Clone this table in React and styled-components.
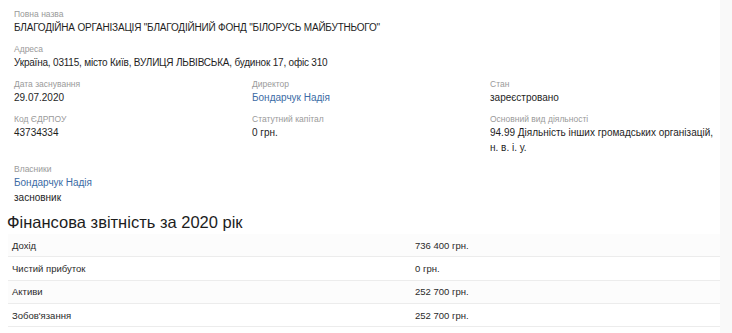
import React from 'react';
import styled, { createGlobalStyle } from 'styled-components';

const GlobalStyle = createGlobalStyle`
  html, body {
    margin: 0;
    padding: 0;
    background: #f9f9f9;
  }
  body {
    font-family: 'Liberation Sans', Arial, sans-serif;
    color: #222;
    -webkit-font-smoothing: antialiased;
  }
`;

const Page = styled.main`
  width: 720px;
  min-height: 333px;
  background: #fff;
  padding-top: 9px;
  box-sizing: border-box;
`;

const Info = styled.section`
  padding-left: 14px;
  display: grid;
  grid-template-columns: repeat(3, 238px);
  row-gap: 9px;
`;

const Field = styled.div`
  grid-column: ${p => (p.$wide ? '1 / -1' : 'auto')};
  padding-right: 6px;
`;

const Label = styled.div`
  font-size: 8.5px;
  line-height: 11px;
  color: #9a9a9a;
`;

const Value = styled.div`
  font-size: 10px;
  line-height: 15px;
  color: #1e1e1e;
  letter-spacing: ${p => (p.$caps ? '-0.2px' : '0')};
`;

const Link = styled.a`
  display: block;
  font-size: 10px;
  line-height: 15px;
  color: #3b6ba5;
  text-decoration: none;
`;

const Heading = styled.h2`
  margin: 6px 0 0 7px;
  font-size: 16.5px;
  line-height: 22px;
  font-weight: 400;
  color: #1d1d1d;
`;

const Table = styled.div`
  margin: 1px 0 0 8px;
  width: 712px;
`;

const Row = styled.div`
  display: grid;
  grid-template-columns: 403px 1fr;
  height: 22.3px;
  align-items: center;
  border-bottom: 1px solid #ececec;
  background: ${p => (p.$odd ? '#fcfcfc' : '#fff')};
`;

const Cell = styled.div`
  padding-left: 4px;
  font-size: 9.5px;
  color: #2a2a2a;
`;

const finance = [
  ['Дохід', '736 400 грн.'],
  ['Чистий прибуток', '0 грн.'],
  ['Активи', '252 700 грн.'],
  ["Зобов'язання", '252 700 грн.'],
];

export default function App() {
  return (
    <>
      <GlobalStyle />
      <Page>
        <Info>
          <Field $wide>
            <Label>Повна назва</Label>
            <Value $caps>
              БЛАГОДІЙНА ОРГАНІЗАЦІЯ "БЛАГОДІЙНИЙ ФОНД "БІЛОРУСЬ МАЙБУТНЬОГО"
            </Value>
          </Field>
          <Field $wide>
            <Label>Адреса</Label>
            <Value $caps>
              Україна, 03115, місто Київ, ВУЛИЦЯ ЛЬВІВСЬКА, будинок 17, офіс 310
            </Value>
          </Field>
          <Field>
            <Label>Дата заснування</Label>
            <Value>29.07.2020</Value>
          </Field>
          <Field>
            <Label>Директор</Label>
            <Link href="#">Бондарчук Надія</Link>
          </Field>
          <Field>
            <Label>Стан</Label>
            <Value>зареєстровано</Value>
          </Field>
          <Field>
            <Label>Код ЄДРПОУ</Label>
            <Value>43734334</Value>
          </Field>
          <Field>
            <Label>Статутний капітал</Label>
            <Value>0 грн.</Value>
          </Field>
          <Field>
            <Label>Основний вид діяльності</Label>
            <Value>94.99 Діяльність інших громадських організацій, н. в. і. у.</Value>
          </Field>
          <Field>
            <Label>Власники</Label>
            <Link href="#">Бондарчук Надія</Link>
            <Value>засновник</Value>
          </Field>
        </Info>
        <Heading>Фінансова звітність за 2020 рік</Heading>
        <Table>
          {finance.map(([name, amount], i) => (
            <Row key={name} $odd={i % 2 === 0}>
              <Cell>{name}</Cell>
              <Cell>{amount}</Cell>
            </Row>
          ))}
        </Table>
      </Page>
    </>
  );
}
